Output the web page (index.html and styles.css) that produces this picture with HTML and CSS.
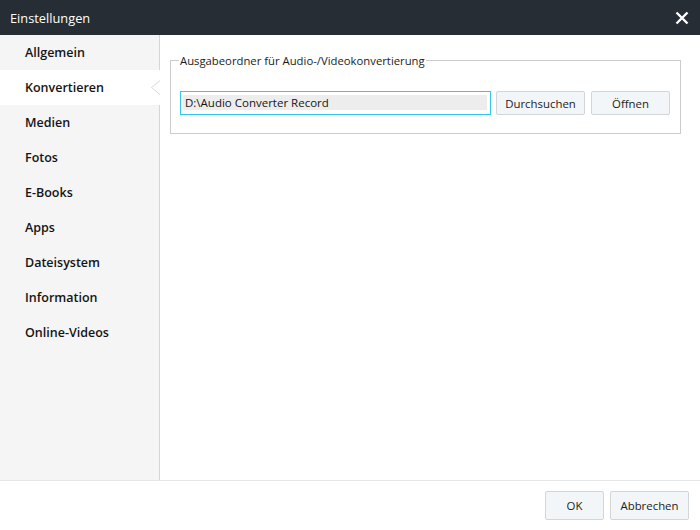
FILE: index.html
```html
<!DOCTYPE html>
<html lang="de">
<head>
<meta charset="utf-8">
<title>Einstellungen</title>
<link rel="stylesheet" href="styles.css">
</head>
<body>
<div class="window">
  <div class="titlebar">
    <span class="title">Einstellungen</span>
    <svg class="close" width="14" height="14" viewBox="0 0 14 14">
      <path d="M1.5 1.5 L12.5 12.5 M12.5 1.5 L1.5 12.5" stroke="#ffffff" stroke-width="2.4" fill="none"/>
    </svg>
  </div>
  <div class="main">
    <ul class="sidebar">
      <li class="item">Allgemein</li>
      <li class="item active">Konvertieren</li>
      <li class="item">Medien</li>
      <li class="item">Fotos</li>
      <li class="item">E-Books</li>
      <li class="item">Apps</li>
      <li class="item">Dateisystem</li>
      <li class="item">Information</li>
      <li class="item">Online-Videos</li>
    </ul>
    <div class="content">
      <fieldset class="group">
        <legend class="legend">Ausgabeordner für Audio-/Videokonvertierung</legend>
        <div class="row">
          <div class="path"><span class="path-text">D:\Audio Converter Record</span></div>
          <button class="btn btn-browse">Durchsuchen</button>
          <button class="btn btn-open">Öffnen</button>
        </div>
      </fieldset>
    </div>
  </div>
  <div class="footer">
    <button class="btn btn-ok">OK</button>
    <button class="btn btn-cancel">Abbrechen</button>
  </div>
</div>
</body>
</html>
```

FILE: styles.css
```css
* { box-sizing: border-box; }
html, body { margin: 0; padding: 0; background: #ffffff; }
body { font-family: "Open Sans", "Noto Sans", "Liberation Sans", sans-serif; color: #1b1b1b; }

.window { width: 700px; height: 530px; display: flex; flex-direction: column; }

.titlebar {
  height: 35px; background: #262d34; color: #ffffff;
  display: flex; align-items: center; justify-content: space-between;
  padding: 0 11px 0 10px;
}
.title { font-size: 12.8px; }
.close { display: block; }

.main { flex: 1; display: flex; min-height: 0; }

.sidebar {
  width: 160px; margin: 0; padding: 0; list-style: none;
  background: #f5f5f5; border-right: 1px solid #d6d6d6;
}
.item {
  height: 35px; line-height: 36px; padding-left: 25px;
  font-size: 12.5px; font-weight: 600; color: #141414;
  position: relative;
}
.active { background: #ffffff; margin-right: -1px; }
.active::after {
  content: ""; position: absolute; right: 0; top: 11px;
  width: 8px; height: 13px; background: #ffffff;
  clip-path: polygon(100% 0, 0 50%, 100% 100%);
}
.active::before {
  content: ""; position: absolute; right: 0; top: 10px;
  width: 9px; height: 15px; background: #d6d6d6;
  clip-path: polygon(100% 0, 0 50%, 100% 100%);
}

.content { flex: 1; padding: 18px 19px 0 10px; }

.group {
  margin: 0; padding: 23px 9px 18px 9px;
  border: 1px solid #cccccc;
}
.legend { font-size: 11.3px; padding: 0 1px; margin-left: -1px; color: #1b1b1b; }

.row { display: flex; gap: 5px; }
.path {
  width: 311px; height: 24px; border: 1px solid #35c5ee;
  padding: 3px 3px 4px 2px; background: #ffffff;
}
.path-text {
  display: block; height: 15px; line-height: 15px; background: #ededed;
  font-size: 11.5px; padding-left: 2px; color: #141414;
}

.btn {
  font-family: inherit; font-size: 11.4px; color: #1b1b1b;
  background: #f3f6f9; border: 1px solid #d3d6d9; border-radius: 2px;
  height: 24px; padding: 0;
}
.btn-browse { width: 89px; }
.btn-open { width: 79px; margin-left: 1px; }

.footer {
  height: 50px; border-top: 1px solid #e6e6e6;
  display: flex; justify-content: flex-end; align-items: center;
  gap: 6px; padding: 0 11px 0 0;
}
.btn-ok { width: 59px; height: 29px; }
.btn-cancel { width: 79px; height: 29px; }
```
